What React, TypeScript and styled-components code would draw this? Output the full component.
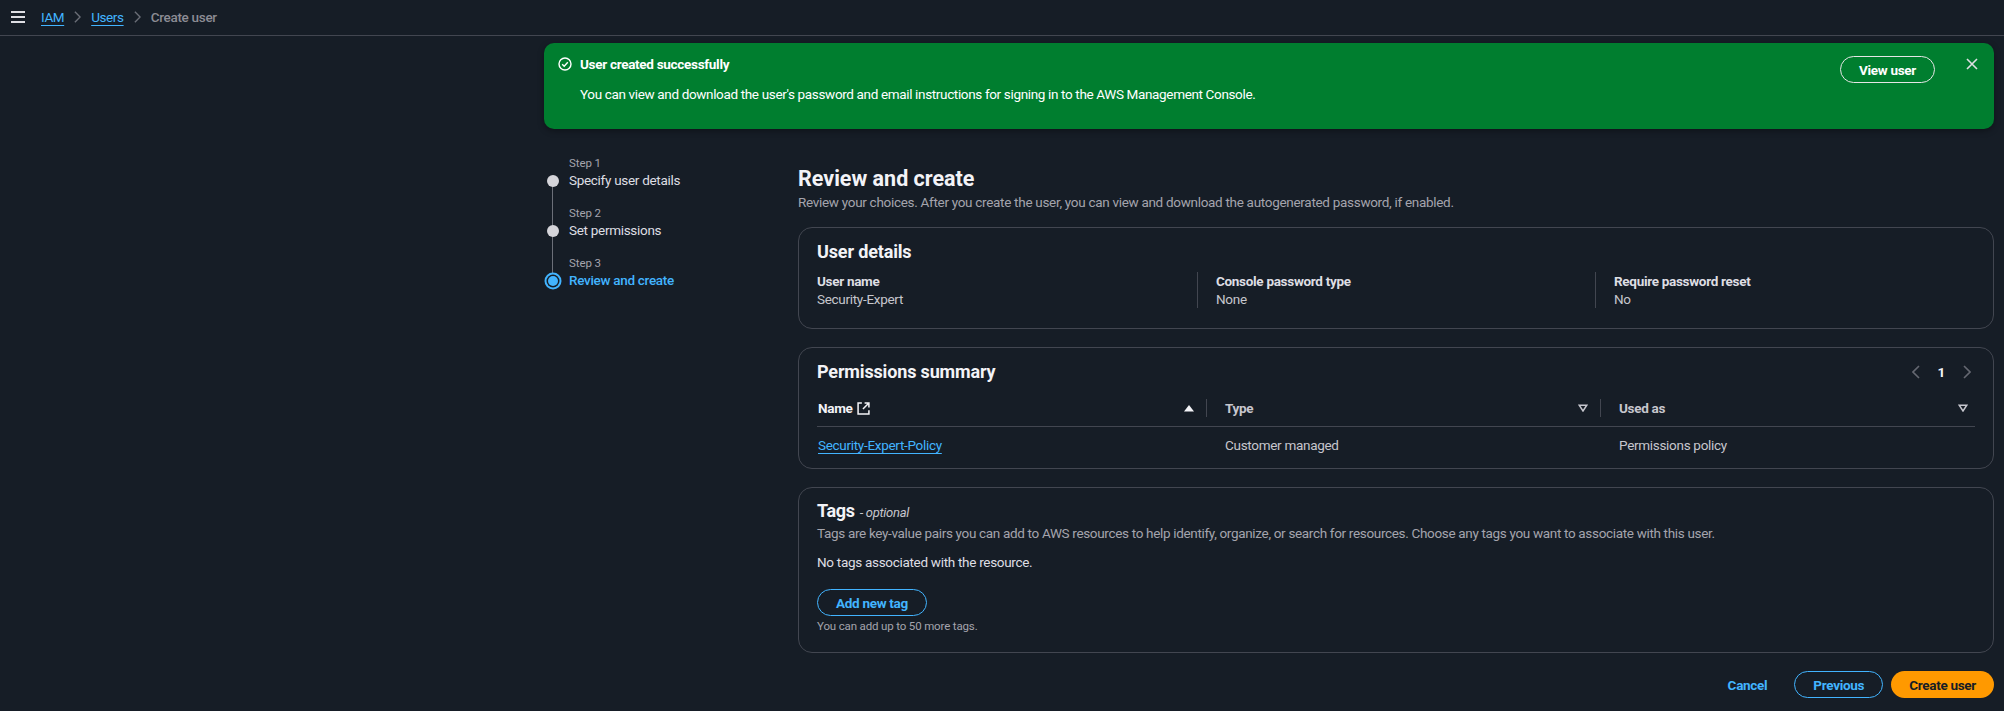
import React from 'react'
import styled, { createGlobalStyle } from 'styled-components'

const GlobalStyle = createGlobalStyle`
  html, body {
    margin: 0;
    background: #161d26;
    color: #c6c6cd;
    font-family: Roboto, "Open Sans", "Liberation Sans", sans-serif;
    font-size: 13.5px;
    line-height: 20px;
    letter-spacing: -0.3px;
  }
  * {
    box-sizing: border-box;
  }
  button {
    letter-spacing: inherit;
  }
`

export default function App() {
  return (
    <>
      <GlobalStyle />
      <Page>
        <TopBar>
          <MenuIcon viewBox="0 0 14 12">
            <path d="M0 1h14M0 6h14M0 11h14" />
          </MenuIcon>
          <Crumb>IAM</Crumb>
          <CrumbArrow viewBox="0 0 8 14">
            <path d="M1 1l6 6-6 6" />
          </CrumbArrow>
          <Crumb>Users</Crumb>
          <CrumbArrow viewBox="0 0 8 14">
            <path d="M1 1l6 6-6 6" />
          </CrumbArrow>
          <CurrentCrumb>Create user</CurrentCrumb>
        </TopBar>

        <Main>
          <Flash>
            <FlashBody>
              <FlashTitle>
                <svg width="14" height="14" viewBox="0 0 14 14" fill="none" stroke="#fff" strokeWidth="1.4">
                  <circle cx="7" cy="7" r="6" />
                  <path d="M4.2 7.2l2 2 3.6-4" />
                </svg>
                User created successfully
              </FlashTitle>
              <FlashText>
                You can view and download the user's password and email instructions for signing in to the AWS Management Console.
              </FlashText>
            </FlashBody>
            <ViewButton>View user</ViewButton>
            <CloseIcon viewBox="0 0 12 12">
              <path d="M1 1l10 10M11 1L1 11" />
            </CloseIcon>
          </Flash>

          <Wizard>
            <Steps>
              <Step>
                <StepLabel>Step 1</StepLabel>
                <StepDot />
                <StepName>Specify user details</StepName>
              </Step>
              <Step>
                <StepLabel>Step 2</StepLabel>
                <StepDot />
                <StepName>Set permissions</StepName>
              </Step>
              <Step $last>
                <StepLabel>Step 3</StepLabel>
                <StepDot $active />
                <StepName $active>Review and create</StepName>
              </Step>
            </Steps>

            <Content>
              <PageTitle>Review and create</PageTitle>
              <PageDescription>
                Review your choices. After you create the user, you can view and download the autogenerated password, if enabled.
              </PageDescription>

              <DetailsCard>
                <CardTitle>User details</CardTitle>
                <DetailGrid>
                  <Detail>
                    <DetailKey>User name</DetailKey>
                    <div>Security-Expert</div>
                  </Detail>
                  <Detail>
                    <DetailKey>Console password type</DetailKey>
                    <div>None</div>
                  </Detail>
                  <Detail>
                    <DetailKey>Require password reset</DetailKey>
                    <div>No</div>
                  </Detail>
                </DetailGrid>
              </DetailsCard>

              <PermissionsCard>
                <CardHeader>
                  <CardTitle>Permissions summary</CardTitle>
                  <Pager>
                    <PagerArrow viewBox="0 0 8 14">
                      <path d="M7 1L1 7l6 6" />
                    </PagerArrow>
                    <PageNumber>1</PageNumber>
                    <PagerArrow viewBox="0 0 8 14">
                      <path d="M1 1l6 6-6 6" />
                    </PagerArrow>
                  </Pager>
                </CardHeader>
                <PolicyTable>
                  <thead>
                    <tr>
                      <HeadCell $width={389} $sorted>
                        <HeadInner $first>
                          <span>
                            Name
                            <ExternalIcon viewBox="0 0 12 12">
                              <path d="M4.5 1H1v10h10V7.5M7 1h4v4M11 1L5.5 6.5" />
                            </ExternalIcon>
                          </span>
                          <SortIcon viewBox="0 0 10 8" $filled>
                            <path d="M5 1l5 6.5H0z" />
                          </SortIcon>
                        </HeadInner>
                      </HeadCell>
                      <HeadCell $width={394}>
                        <HeadInner>
                          Type
                          <SortIcon viewBox="0 0 10 8">
                            <path d="M1.2 1.2h7.6L5 7z" />
                          </SortIcon>
                        </HeadInner>
                      </HeadCell>
                      <HeadCell>
                        <HeadInner $last>
                          Used as
                          <SortIcon viewBox="0 0 10 8" $last>
                            <path d="M1.2 1.2h7.6L5 7z" />
                          </SortIcon>
                        </HeadInner>
                      </HeadCell>
                    </tr>
                  </thead>
                  <tbody>
                    <tr>
                      <BodyCell>
                        <PolicyLink>Security-Expert-Policy</PolicyLink>
                      </BodyCell>
                      <BodyCell>Customer managed</BodyCell>
                      <BodyCell>Permissions policy</BodyCell>
                    </tr>
                  </tbody>
                </PolicyTable>
              </PermissionsCard>

              <TagsCard>
                <TagsTitle>
                  <strong>Tags</strong> <em>- optional</em>
                </TagsTitle>
                <TagsDescription>
                  Tags are key-value pairs you can add to AWS resources to help identify, organize, or search for resources. Choose any tags you want to associate with this user.
                </TagsDescription>
                <NoTags>No tags associated with the resource.</NoTags>
                <OutlineButton>Add new tag</OutlineButton>
                <TagHint>You can add up to 50 more tags.</TagHint>
              </TagsCard>

              <Actions>
                <CancelLink>Cancel</CancelLink>
                <OutlineButton>Previous</OutlineButton>
                <PrimaryButton>Create user</PrimaryButton>
              </Actions>
            </Content>
          </Wizard>
        </Main>
      </Page>
    </>
  )
}

const Page = styled.div`
  width: 2004px;
  height: 711px;
  overflow: hidden;
`
const TopBar = styled.nav`
  height: 36px;
  display: flex;
  align-items: center;
  padding: 0 0 2px 11px;
  border-bottom: 1px solid #424650;
`
const MenuIcon = styled.svg`
  width: 14px;
  height: 12px;
  margin-right: 16px;
  fill: none;
  stroke: #dedee3;
  stroke-width: 2;
`
const Crumb = styled.a`
  color: #42b4ff;
  letter-spacing: -0.4px;
  text-decoration: underline;
  text-underline-offset: 3px;
`
const CrumbArrow = styled.svg`
  width: 7px;
  height: 14px;
  margin: 0 10px;
  fill: none;
  stroke: #6b6f78;
  stroke-width: 1.6;
`
const CurrentCrumb = styled.span`
  color: #8c8c94;
  font-weight: 500;
`
const Main = styled.main`
  padding: 7px 10px 0 544px;
`
const Flash = styled.section`
  height: 86px;
  display: flex;
  align-items: flex-start;
  padding: 11px 16px 0 14px;
  background: #007e2f;
  border-radius: 10px;
  color: #fff;
  box-shadow: 0 2px 6px rgba(0, 0, 0, 0.35);
`
const FlashBody = styled.div`
  flex: 1;
`
const FlashTitle = styled.div`
  display: flex;
  align-items: center;
  gap: 8px;
  height: 20px;
  font-weight: 700;
`
const FlashText = styled.div`
  margin: 10px 0 0 22px;
  letter-spacing: -0.35px;
`
const ViewButton = styled.button`
  width: 95px;
  height: 27px;
  margin: 2px 31px 0 0;
  background: transparent;
  border: 1px solid #e6e6e6;
  border-radius: 20px;
  color: #fff;
  font: 700 13.5px Roboto, sans-serif;
`
const CloseIcon = styled.svg`
  width: 12px;
  height: 12px;
  margin-top: 4px;
  fill: none;
  stroke: #dedee3;
  stroke-width: 1.6;
`
const Wizard = styled.div`
  display: grid;
  grid-template-columns: 254px 1fr;
  margin-top: 25px;
`
const Steps = styled.ol`
  list-style: none;
  margin: 1px 0 0;
  padding: 0;
`
const Step = styled.li<{ $last?: boolean }>`
  position: relative;
  height: 50px;
  display: grid;
  grid-template-columns: 17px 1fr;
  grid-template-rows: 16px 20px;
  column-gap: 8px;
  align-items: center;

  &::after {
    content: '';
    display: ${p => (p.$last ? 'none' : 'block')};
    position: absolute;
    left: 8px;
    top: 30px;
    width: 1px;
    height: 46px;
    background: #6b6f78;
  }
`
const StepLabel = styled.div`
  grid-column: 2;
  font-size: 11.5px;
  line-height: 16px;
  letter-spacing: -0.1px;
  color: #a4a4ad;
`
const StepDot = styled.span<{ $active?: boolean }>`
  grid-column: 1;
  grid-row: 2;
  justify-self: center;
  width: ${p => (p.$active ? '10px' : '12px')};
  height: ${p => (p.$active ? '10px' : '12px')};
  border-radius: 50%;
  background: ${p => (p.$active ? '#42b4ff' : '#d5d5da')};
  ${p => p.$active && 'box-shadow: 0 0 0 1.5px #161d26, 0 0 0 3.5px #42b4ff;'}
  z-index: 1;
`
const StepName = styled.div<{ $active?: boolean }>`
  grid-column: 2;
  grid-row: 2;
  margin-top: -2px;
  color: ${p => (p.$active ? '#42b4ff' : '#dedee3')};
  font-weight: ${p => (p.$active ? 500 : 400)};
`
const Content = styled.div`
  padding-top: 11px;
`
const PageTitle = styled.h1`
  margin: 0;
  font-size: 21.5px;
  line-height: 27px;
  font-weight: 700;
  letter-spacing: 0;
  color: #f3f3f7;
`
const PageDescription = styled.p`
  margin: 0 0 15px;
  color: #a4a4ad;
`
const Card = styled.section`
  border: 1px solid #424650;
  border-radius: 14px;
  padding: 12px 18px 0;
  margin-bottom: 18px;
`
const DetailsCard = styled(Card)`
  height: 102px;
`
const PermissionsCard = styled(Card)`
  height: 122px;
`
const TagsCard = styled(Card)`
  height: 166px;
`
const CardTitle = styled.h2`
  margin: 0;
  font-size: 18px;
  line-height: 24px;
  font-weight: 700;
  letter-spacing: -0.15px;
  color: #f3f3f7;
`
const DetailGrid = styled.div`
  display: grid;
  grid-template-columns: 380px 398px 1fr;
  margin-top: 8px;
`
const Detail = styled.div`
  padding-left: 18px;
  min-height: 36px;
  line-height: 18px;
  border-left: 1px solid #424650;

  &:first-child {
    padding-left: 0;
    border-left: none;
  }
`
const DetailKey = styled.div`
  font-weight: 700;
  color: #dedee3;
`
const CardHeader = styled.div`
  display: flex;
  justify-content: space-between;
  align-items: center;
`
const Pager = styled.div`
  display: flex;
  align-items: center;
  gap: 18px;
  margin-right: 4px;
`
const PagerArrow = styled.svg`
  width: 8px;
  height: 14px;
  fill: none;
  stroke: #656871;
  stroke-width: 1.6;
`
const PageNumber = styled.span`
  color: #f3f3f7;
  font-weight: 700;
`
const PolicyTable = styled.table`
  width: 100%;
  margin-top: 7px;
  border-collapse: collapse;
  table-layout: fixed;
`
const HeadCell = styled.th<{ $width?: number; $sorted?: boolean }>`
  width: ${p => (p.$width ? `${p.$width}px` : 'auto')};
  height: 35px;
  padding: 0;
  text-align: left;
  font-weight: 700;
  color: ${p => (p.$sorted ? '#f3f3f7' : '#c6c6cd')};
  border-bottom: 1px solid #424650;
`
const HeadInner = styled.div<{ $first?: boolean; $last?: boolean }>`
  display: flex;
  align-items: center;
  justify-content: space-between;
  height: 18px;
  padding-left: ${p => (p.$first ? '1px' : '18px')};
  border-left: ${p => (p.$first ? 'none' : '1px solid #424650')};
`
const ExternalIcon = styled.svg`
  width: 13px;
  height: 13px;
  margin-left: 4px;
  vertical-align: -2px;
  fill: none;
  stroke: #f3f3f7;
  stroke-width: 1.4;
`
const SortIcon = styled.svg<{ $filled?: boolean; $last?: boolean }>`
  width: 10px;
  height: 8px;
  margin-right: ${p => (p.$last ? '7px' : '12px')};
  fill: ${p => (p.$filled ? '#f3f3f7' : 'none')};
  stroke: ${p => (p.$filled ? 'none' : '#c6c6cd')};
  stroke-width: 1.5;
`
const BodyCell = styled.td`
  height: 37px;
  padding: 0 0 0 19px;

  &:first-child {
    padding-left: 1px;
  }
`
const PolicyLink = styled.a`
  color: #42b4ff;
  text-decoration: underline;
  text-underline-offset: 3px;
`
const TagsTitle = styled.div`
  font-size: 13px;
  line-height: 22px;
  color: #c6c6cd;

  strong {
    font-size: 18px;
    font-weight: 700;
    margin-right: 2px;
    color: #f3f3f7;
  }
`
const TagsDescription = styled.p`
  margin: 0;
  color: #a4a4ad;
  line-height: 18px;
  letter-spacing: -0.33px;
`
const NoTags = styled.p`
  margin: 10px 0 17px;
  color: #dedee3;
`
const OutlineButton = styled.button`
  display: block;
  height: 27px;
  padding: 0 18px;
  background: transparent;
  border: 1px solid #42b4ff;
  border-radius: 20px;
  color: #42b4ff;
  font: 700 13.5px Roboto, sans-serif;
`
const TagHint = styled.div`
  margin-top: 2px;
  font-size: 11.5px;
  line-height: 16px;
  letter-spacing: -0.15px;
  color: #a4a4ad;
`
const Actions = styled.div`
  display: flex;
  justify-content: flex-end;
  align-items: center;
  margin-top: 1px;
`
const CancelLink = styled.a`
  margin-right: 27px;
  color: #42b4ff;
  font-weight: 700;
`
const PrimaryButton = styled.button`
  height: 27px;
  margin-left: 8px;
  padding: 0 18px;
  background: #ff9900;
  border: none;
  border-radius: 20px;
  color: #161d26;
  font: 700 13.5px Roboto, sans-serif;
`
